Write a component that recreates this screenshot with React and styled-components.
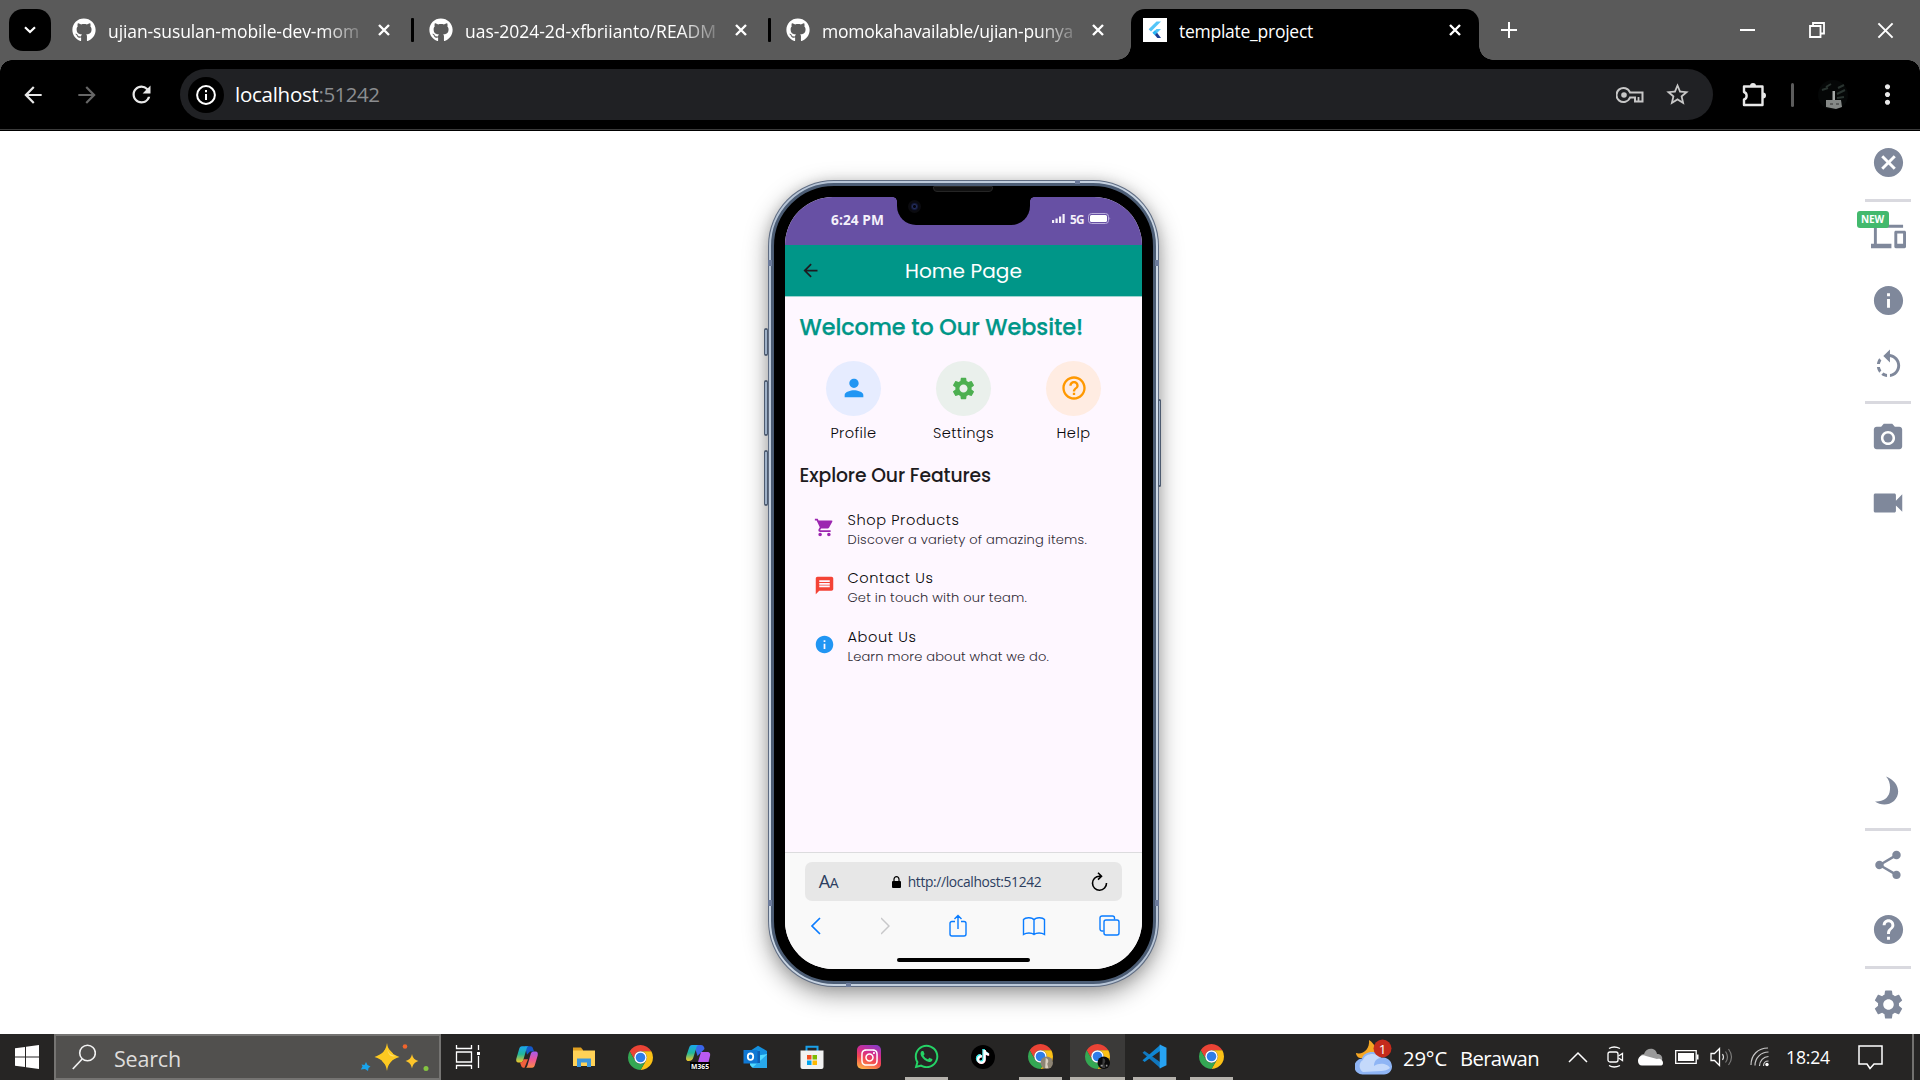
import React, { useLayoutEffect, useRef, useState } from "react";
import styled, { createGlobalStyle } from "styled-components";
import { FaGithub, FaWhatsapp, FaTiktok, FaInstagram } from "react-icons/fa";
import {
  MdArrowBack, MdArrowForward, MdRefresh, MdStarBorder, MdMoreVert,
  MdCancel, MdDevices, MdInfo, MdRotateLeft, MdPhotoCamera, MdVideocam, MdShare,
  MdHelp, MdSettings, MdPerson, MdHelpOutline, MdShoppingCart, MdMessage,
} from "react-icons/md";

const UI = `"Open Sans", "Noto Sans", sans-serif`;
const APP = `Poppins, Inter, "Open Sans", sans-serif`;

const Global = createGlobalStyle`
  * { box-sizing: border-box; }
  body { margin: 0; overflow: hidden; background: #fff; font-family: ${UI}; }
  svg { display: block; flex: none; }
`;

/* Label tracked out (or in) so that it fills the given width. */
const Tracked = styled.span`
  display: inline-block;
  white-space: pre;
`;
function Fit({ w, children }) {
  const ref = useRef(null);
  const [track, setTrack] = useState(0);
  useLayoutEffect(() => {
    const natural = ref.current.getBoundingClientRect().width;
    setTrack((w - natural) / children.length);
  }, [w, children]);
  return <Tracked ref={ref} style={{ letterSpacing: track }}>{children}</Tracked>;
}

const Desktop = styled.div`
  width: 1920px;
  height: 1080px;
  display: flex;
  flex-direction: column;
  background: #fff;
`;

/* ---------- browser ---------- */
const TabStrip = styled.div`
  height: 60px;
  flex: none;
  display: flex;
  background: #5a5a5a;
  color: #fff;
`;
const TabSearch = styled.div`
  width: 42px;
  height: 42px;
  margin: 9px 9px 9px 9px;
  border-radius: 14px;
  background: #000;
  display: grid;
  place-items: center;
`;
const Tab = styled.div`
  position: relative;
  width: ${(p) => (p.$active ? 348 : 357)}px;
  height: 51px;
  margin-top: 9px;
  padding: 0 ${(p) => (p.$active ? 14 : 3)}px 9px 12px;
  display: flex;
  align-items: center;
  background: ${(p) => (p.$active ? "#000" : "transparent")};
  border-radius: 14px 14px 0 0;
  &::before, &::after {
    content: ${(p) => (p.$active ? '""' : "none")};
    position: absolute;
    bottom: 0;
    width: 14px;
    height: 14px;
  }
  &::before { left: -14px; background: radial-gradient(circle at 0 0, transparent 13.5px, #000 14px); }
  &::after { right: -14px; background: radial-gradient(circle at 100% 0, transparent 13.5px, #000 14px); }
`;
const TabLabel = styled.div`
  width: 250px;
  margin: 2px 0 0 12px;
  overflow: hidden;
  font-size: 17.5px;
  line-height: 26px;
  mask-image: ${(p) => (p.$fade ? "linear-gradient(90deg, #000 215px, rgba(0,0,0,.25) 250px)" : "none")};
`;
const TabClose = styled.div`
  width: 20px;
  margin-left: 16px;
  display: grid;
  place-items: center;
`;
const TabRule = styled.div`
  width: 3px;
  height: 24px;
  border-radius: 1px;
  margin-left: auto;
  background: ${(p) => (p.$on ? "#000" : "transparent")};
`;
const NewTab = styled.div`
  width: 60px;
  height: 60px;
  display: grid;
  place-items: center;
`;
const WindowButtons = styled.div`
  margin-left: auto;
  display: flex;
`;
const WindowButton = styled.div`
  width: 69px;
  height: 60px;
  display: grid;
  place-items: center;
`;
const Toolbar = styled.div`
  height: 71px;
  flex: none;
  display: flex;
  align-items: flex-start;
  padding-top: 9px;
  background:
    radial-gradient(circle at 12px 12px, transparent 11.5px, #5a5a5a 12px) 0 0 / 12px 12px no-repeat,
    radial-gradient(circle at 0 12px, transparent 11.5px, #5a5a5a 12px) 100% 0 / 12px 12px no-repeat,
    linear-gradient(#000 69px, #3b3b3b 69px, #3b3b3b 70px, #000 70px);
  color: #e3e3e3;
`;
const ToolbarSlot = styled.div`
  width: ${(p) => p.$w}px;
  height: 51px;
  display: grid;
  place-items: center;
  color: ${(p) => p.$c || "#e8e8e8"};
`;
const Omnibox = styled.div`
  width: 1533px;
  height: 51px;
  border-radius: 26px;
  background: #202124;
  display: flex;
  align-items: center;
  padding: 0 22px 0 8px;
`;
const SiteInfo = styled.div`
  width: 36px;
  height: 36px;
  border-radius: 50%;
  background: #000;
  display: grid;
  place-items: center;
  margin-right: 11px;
`;
const Address = styled.div`
  flex: 1;
  display: flex;
  margin-bottom: 2px;
  font-size: 20.5px;
  line-height: 28px;
  color: #8b8d90;
  strong { font-weight: 400; color: #fff; }
`;
const OmniActions = styled.div`
  display: flex;
  align-items: center;
  gap: 20px;
  color: #c7c7c7;
`;
const ToolbarRule = styled.div`
  width: 3px;
  height: 24px;
  border-radius: 2px;
  background: #5c5c5c;
  margin-top: 14px;
`;

/* ---------- page ---------- */
const Page = styled.main`
  height: 903px;
  display: flex;
`;
const Stage = styled.div`
  flex: 1;
  padding: 49px 0 0 768px;
`;
const Frame = styled.div`
  position: relative;
  width: 391px;
  height: 807px;
  padding: 1px;
  border-radius: 66px;
  background: #5f6c82;
  box-shadow: 0 8px 24px rgba(0, 0, 0, 0.38), 0 1px 12px rgba(0, 0, 0, 0.12);
`;
const Rim = styled.div`
  height: 100%;
  padding: 2px;
  border-radius: 65px;
  background: linear-gradient(135deg, #b4c2d4, #d3deea 50%, #b4c2d4);
`;
const Bezel = styled.div`
  height: 100%;
  padding: 11px 12px 12px 11px;
  border: 3px solid #4c5d75;
  border-radius: 63px;
  background: #000;
`;
const SideButton = styled.div`
  position: absolute;
  left: ${(p) => (p.$right ? "auto" : "-4px")};
  right: ${(p) => (p.$right ? "-2px" : "auto")};
  top: ${(p) => p.$top}px;
  width: ${(p) => (p.$right ? 3 : 4)}px;
  height: ${(p) => p.$h}px;
  border: solid #4d5b70;
  border-width: 2px 1px;
  border-radius: 2px;
  background: #9fb1c8;
`;
const Antenna = styled.div`
  position: absolute;
  left: ${(p) => p.$x}px;
  top: ${(p) => p.$y}px;
  width: ${(p) => p.$w}px;
  height: ${(p) => p.$h}px;
  background: #6d7c9c;
`;
const Screen = styled.div`
  height: 772px;
  width: 357px;
  overflow: hidden;
  border-radius: 48px;
  display: flex;
  flex-direction: column;
  background: #fef7ff;
`;
const Notch = styled.div`
  position: absolute;
  left: 129px;
  top: 15px;
  width: 133px;
  height: 30px;
  border-radius: 0 0 19px 19px;
  background: #000;
  &::before, &::after {
    content: "";
    position: absolute;
    top: 2px;
    width: 4px;
    height: 4px;
  }
  &::before { left: -4px; background: radial-gradient(circle at 0 100%, transparent 3.5px, #000 4px); }
  &::after { right: -4px; background: radial-gradient(circle at 100% 100%, transparent 3.5px, #000 4px); }
`;
const Speaker = styled.div`
  position: absolute;
  left: 165px;
  top: 6px;
  width: 60px;
  height: 6px;
  border: 1px solid #252525;
  border-radius: 1px 1px 4px 4px;
  background: #111;
`;
const Lens = styled.div`
  position: absolute;
  left: 140px;
  top: 20px;
  width: 13px;
  height: 13px;
  border: 2px solid #0b0b0f;
  border-radius: 50%;
  background: radial-gradient(circle at 50% 50%, #05050c 1px, #222c5c 2px, #0a0b18 4px);
`;
const StatusBar = styled.div`
  height: 48px;
  flex: none;
  padding: 0 31px 3px 46px;
  display: flex;
  justify-content: space-between;
  align-items: center;
  background: #6750a4;
  color: #f4f0fa;
  font-size: 13.7px;
  font-weight: 700;
`;
const StatusIcons = styled.div`
  display: flex;
  align-items: center;
  gap: 4px;
  margin-top: -2px;
  font-size: 11.8px;
`;
const AppBar = styled.div`
  height: 52px;
  flex: none;
  display: grid;
  grid-template-columns: 50px 1fr 50px;
  align-items: center;
  justify-items: center;
  border-bottom: 1px solid #9fd4d0;
  background: #009688;
  color: #1d1b20;
`;
const AppTitle = styled.div`
  color: #fff;
  font-family: ${APP};
  font-size: 20.1px;
  padding-top: 1px;
`;
const AppBody = styled.div`
  flex: 1;
  padding: 16px 15px 0 14.5px;
  font-family: ${APP};
  color: #1d1b20;
`;
const Welcome = styled.div`
  color: #009688;
  font-size: 22.3px;
  line-height: 30px;
  font-weight: 500;
  -webkit-text-stroke: 0.25px #009688;
`;
const Shortcuts = styled.div`
  display: grid;
  grid-template-columns: repeat(3, 110px);
  justify-content: center;
  margin: 17.5px 0 0 0.5px;
`;
const Shortcut = styled.div`
  display: flex;
  flex-direction: column;
  align-items: center;
  gap: 7px;
  color: #08070a;
  font-size: 14.6px;
  font-weight: 300;
  line-height: 20px;
`;
const Disc = styled.div`
  width: 55px;
  height: 55px;
  border-radius: 50%;
  display: grid;
  place-items: center;
  background: ${(p) => p.$bg};
  color: ${(p) => p.$fg};
`;
const SectionTitle = styled.div`
  margin-top: 20px;
  font-size: 18.8px;
  line-height: 26px;
  font-weight: 500;
`;
const FeatureList = styled.div`
  margin-top: 21px;
  display: flex;
  flex-direction: column;
  gap: 18.7px;
`;
const Feature = styled.div`
  height: 40px;
  padding-left: 14.5px;
  display: flex;
  gap: 12.5px;
  font-weight: 300;
  & > svg { margin-top: 7px; color: ${(p) => p.$fg}; }
`;
const FeatureName = styled.div`
  font-size: 14.6px;
  line-height: 20px;
  color: #08070a;
`;
const FeatureNote = styled.div`
  font-size: 13px;
  line-height: 19px;
  color: #2e2a34;
`;
const SafariBar = styled.div`
  height: 117px;
  flex: none;
  border-top: 1px solid #dcdcde;
  background: #f9f9f9;
  padding: 9px 20px 0;
`;
const UrlBox = styled.div`
  height: 39px;
  border-radius: 7px;
  background: #e7e7e7;
  display: grid;
  grid-template-columns: 33px 1fr 46px;
  align-items: center;
  justify-items: center;
  color: #2c3e60;
`;
const TextSize = styled.div`
  justify-self: end;
  font-size: 18px;
  line-height: 24px;
  padding-top: 1px;
  letter-spacing: -0.5px;
  small { font-size: 14px; }
`;
const UrlText = styled.div`
  display: flex;
  align-items: center;
  gap: 7px;
  margin-left: 19px;
  font-size: 13.8px;
`;
const NavRow = styled.div`
  display: flex;
  justify-content: space-between;
  align-items: center;
  height: 24px;
  margin: 12px 0 0 4px;
  width: 311px;
  color: #0a7cff;
`;
const HomeIndicator = styled.div`
  width: 133px;
  height: 4px;
  border-radius: 2px;
  margin: 21px auto 0;
  background: #000;
`;
const SideTools = styled.div`
  width: 64px;
  color: #7f889b;
  display: flex;
  flex-direction: column;
  align-items: center;
`;
const Tool = styled.div`
  position: relative;
  height: ${(p) => p.$h}px;
  padding: ${(p) => p.$top || 0}px 0 ${(p) => p.$bottom || 0}px 0;
  display: grid;
  place-items: center;
  flex: none;
`;
const ToolRule = styled.div`
  width: 46px;
  height: 3px;
  flex: none;
  background: #d9d9df;
`;
const Spacer = styled.div`
  flex: ${(p) => (p.$h ? `0 0 ${p.$h}px` : 1)};
`;
const NewBadge = styled.div`
  position: absolute;
  left: -14px;
  top: 9px;
  width: 32px;
  height: 17px;
  border-radius: 3px;
  background: #43b96d;
  color: #fff;
  font-size: 10px;
  line-height: 17px;
  font-weight: 700;
  text-align: center;
`;

/* ---------- taskbar ---------- */
const Taskbar = styled.div`
  height: 46px;
  flex: none;
  display: flex;
  background: #262524;
  color: #fff;
`;
const Start = styled.div`
  width: 54px;
  display: grid;
  place-items: center;
`;
const SearchBox = styled.div`
  width: 387px;
  border: 2px solid #757472;
  background: #51504e;
  display: flex;
  align-items: center;
  padding: 0 9px 0 16px;
  color: #dedddc;
  font-size: 21.5px;
  & > div { flex: 1; margin-left: 18px; margin-top: 4px; line-height: 30px; }
`;
const Apps = styled.div`
  display: flex;
`;
const AppCell = styled.div`
  width: 57.1px;
  display: flex;
  justify-content: center;
  padding: 0 1px;
`;
const AppTile = styled.div`
  width: ${(p) => (p.$active ? 55 : 43)}px;
  height: 46px;
  padding-top: ${(p) => (p.$running ? 2 : 0)}px;
  border-bottom: ${(p) => (p.$running ? "3px solid #b5b2ac" : "none")};
  background: ${(p) => (p.$active ? "#3b3a39" : "transparent")};
  display: grid;
  place-items: center;
`;
const TaskView = styled.div`
  padding-right: 4px;
`;
const InstaTile = styled.div`
  width: 24px;
  height: 24px;
  border-radius: 5px;
  display: grid;
  place-items: center;
  background: linear-gradient(200deg, #7b3fd0 0%, #d22c8f 35%, #f4484f 60%, #fdb447 95%);
`;
const TikTokTile = styled.div`
  width: 24px;
  height: 24px;
  border-radius: 50%;
  display: grid;
  place-items: center;
  background: #000;
  svg { filter: drop-shadow(-0.8px -0.5px 0 #25f4ee) drop-shadow(0.8px 0.5px 0 #fe2c55); }
`;
const Tray = styled.div`
  flex: 1;
  display: flex;
  align-items: center;
  justify-content: flex-end;
`;
const Weather = styled.div`
  display: flex;
  align-items: center;
  gap: 11px;
  font-size: 20.3px;
  line-height: 28px;
  margin-right: 29px;
`;
const WeatherText = styled.div`
  display: flex;
  gap: 13px;
  margin-top: 2px;
`;
const TrayIcon = styled.div`
  width: ${(p) => p.$w}px;
  margin-right: ${(p) => p.$gap}px;
  display: flex;
`;
const Clock = styled.div`
  font-size: 17.6px;
  margin-right: 28px;
`;
const PeekLine = styled.div`
  width: 2px;
  height: 46px;
  margin-right: 6px;
  background: #72716f;
`;

const stroke = (c = "currentColor", w = 1.5) => ({ fill: "none", stroke: c, strokeWidth: w });

const CloseX = ({ s = 12, w = 2.4 }) => (
  <svg width={s} height={s} viewBox="0 0 12 12"><path d="M1 1 11 11M11 1 1 11" {...stroke("#fff", w)} /></svg>
);

const FlutterIcon = () => (
  <svg width="24" height="24" viewBox="0 0 24 24">
    <path fill="#fff" d="M0 0h24v24H0z" />
    <path fill="#54c5f8" d="M13.5 3.500h4.500L8 13.500 5.600 11.200z" />
    <path fill="#54c5f8" d="M13.500 11h4.500l-6.200 6.200-2.300-2.400z" />
    <path fill="#29b6f6" d="m9.500 14.800 2.300-2.300 2.300 2.300-2.300 2.300z" />
    <path fill="#1c3f94" d="m11.800 17.100 2.300-2.300 3.900 5.200h-3.600z" />
  </svg>
);

const Chrome = ({ face }) => (
  <svg width="25" height="25" viewBox="0 0 24 24">
    <path fill="#ea4335" d="M1.61 6A12 12 0 0 1 22.39 6H12A6 6 0 0 0 6.8 15Z" />
    <path fill="#fbc116" d="M22.39 6A12 12 0 0 1 12 24L17.2 15A6 6 0 0 0 12 6Z" />
    <path fill="#34a853" d="M12 24A12 12 0 0 1 1.61 6L6.8 15A6 6 0 0 0 17.2 15Z" />
    <circle cx="12" cy="12" r="6" fill="#fff" />
    <circle cx="12" cy="12" r="4.6" fill="#2f7de9" />
    {face && (
      <g>
        <circle cx="18" cy="18" r="6" fill={face === "dark" ? "#0a0a0a" : "#8d8474"} />
        <path d="M17 13.5c3 1 3 4 1.5 5.5l1 4h-3z" fill={face === "dark" ? "#3a3a3a" : "#d8cfc0"} />
        {face === "dark" && <path d="M15 20h2v1.500h-2zM20 20h1.500v1.500H20z" fill="#999" />}
      </g>
    )}
  </svg>
);

const Copilot = () => (
  <svg width="24" height="26" viewBox="0 0 24 24" preserveAspectRatio="none">
    <defs>
      <linearGradient id="cpA" x1="0" y1="0" x2="0" y2="1">
        <stop offset="0" stopColor="#1aa5f0" /><stop offset=".5" stopColor="#22b89a" /><stop offset="1" stopColor="#f3c926" />
      </linearGradient>
      <linearGradient id="cpB" x1="0" y1="0" x2="0" y2="1">
        <stop offset="0" stopColor="#a45cf0" /><stop offset=".5" stopColor="#ee5596" /><stop offset="1" stopColor="#fb8e45" />
      </linearGradient>
    </defs>
    <path fill="#1558c8" d="M10 2h5.500c1.500 0 2.200 1 2.600 2.300L19 7h-4l-3 3z" />
    <path fill="url(#cpA)" d="M7 2h7c-1.500 0-2 1-2.500 2.500L8.500 14c-.5 2-1.500 3-3.500 3H3.500C1.500 17 .8 15.500 1.300 13.500L4 5c.5-2 1.500-3 3-3Z" />
    <path fill="#f0603c" d="M13 14 9.500 22c-2 0-3-.7-3.500-2.500L5 17c2 0 3-1 3.500-3z" />
    <path fill="url(#cpB)" d="M17 22h-7c1.500 0 2-1 2.500-2.500L15.500 10c.5-2 1.500-3 3.500-3h1.500c2 0 2.700 1.500 2.200 3.500L20 19c-.5 2-1.500 3-3 3Z" />
  </svg>
);

const Folder = () => (
  <svg width="24" height="22" viewBox="0 0 24 22">
    <path fill="#e0a021" d="M1 1.500h8l2 2.500v3H1z" />
    <path fill="#ffd257" d="M1 4.500h22V20H1z" />
    <path fill="#3c96dc" d="M5 12.500h14V21h-4v-4.500H9V21H5z" />
  </svg>
);

const M365 = () => (
  <svg width="26" height="26" viewBox="0 0 26 26">
    <path fill="#3a66ea" d="M9 1h7c2 0 3 1.500 3.500 4l-4 4-3 3z" />
    <path fill="url(#cpA)" d="M7 1h7c-2 0-2.500 2-3 4L8.500 13c-.7 2.500-2 4-5 4C.8 17 .8 14.500 1.300 12L4 4c.5-2 1.500-3 3-3Z" />
    <path fill="#b95af0" d="M16 8h6c3 0 3.500 2 3 4l-1.500 6H13z" />
    <path fill="#000" d="M5 18h20v7.500H5z" />
    <text x="6" y="24.6" fill="#fff" fontFamily="Open Sans" fontWeight="700" fontSize="7.5" textLength="18" lengthAdjust="spacingAndGlyphs">M365</text>
  </svg>
);

const Outlook = () => (
  <svg width="25" height="24" viewBox="0 0 25 24">
    <path fill="#1490df" d="M7 6 15 .8 24 6v10H7z" />
    <path fill="#50d9ff" d="M7 12 24 9v13.500H9L7 20z" />
    <path fill="#28a8ea" d="M24 9.500V23L9 23z" />
    <path fill="#0f5fb5" d="M7 6h10v12H7z" />
    <path fill="#0f78d4" d="M.5 5h14v13.500H.5z" />
    <ellipse cx="7.500" cy="11.700" rx="2.700" ry="3.200" {...stroke("#fff", 1.8)} />
  </svg>
);

const Store = () => (
  <svg width="24" height="25" viewBox="0 0 24 25">
    <path d="M6.500 6V1.700h11V6" {...stroke("#1aa0e8", 2)} />
    <path fill="#f2f2f2" d="M.5 5.500h23V22a2 2 0 0 1-2 2h-19a2 2 0 0 1-2-2z" />
    <path fill="#f25022" d="M7 10h4.500v4.500H7z" /><path fill="#7fba00" d="M12.500 10H17v4.500h-4.500z" />
    <path fill="#00a4ef" d="M7 15.500h4.500V20H7z" /><path fill="#ffb900" d="M12.500 15.500H17V20h-4.500z" />
  </svg>
);

const VsCode = () => (
  <svg width="25" height="25" viewBox="0 0 24 24">
    <path d="M.500 8.300 2.500 6.700l15.500 11V23.500z" fill="#1177bd" />
    <path d="M.500 15.700 2.500 17.300 18 6.300V.500z" fill="#0f86d2" />
    <path d="M17 .5 23.500 3.500v17L17 23.500z" fill="#27a3f2" />
  </svg>
);

const Sparkles = () => (
  <svg width="70" height="28" viewBox="0 0 70 28">
    <path fill="#fdc921" d="M27 0c1.500 8.500 4 10.500 12.500 14C31 17 28.500 19.500 27 28c-1.500-8.500-4-11-12.500-14C23 10.500 25.500 8.500 27 0Z" />
    <path fill="#fdc921" d="M27 4l6 6.500-1 7-5 6-5-5.500v-7z" />
    <path fill="#ffe06a" d="M27 4c1 6 3 8 9 9-4 1-8 1-9-9Z" />
    <path fill="#fdc52a" d="M52 11c1 4.500 2.500 5.500 6.500 7-4 1.500-5.500 3-6.500 7.500-1-4.500-2.500-6-6.500-7.500 4-1.500 5.500-2.500 6.500-7Z" />
    <path fill="#19a3ea" d="M6 19 7.500 22 10.500 23.500 8.500 25 8 28 5 26 .8 26.500 2.500 23.500 1.500 21.500 4.500 22Z" />
    <circle cx="45" cy="3.5" r="2.3" fill="#f0642d" />
    <circle cx="66" cy="25.5" r="2.5" fill="#84c441" />
  </svg>
);

const tabs = [
  { label: "ujian-susulan-mobile-dev-mom", rule: true },
  { label: "uas-2024-2d-xfbriianto/READM", rule: true },
  { label: "momokahavailable/ujian-punya", rule: false },
];

const features = [
  { icon: <MdShoppingCart size={21} />, fg: "#9c27b0", name: "Shop Products", nw: 112, note: "Discover a variety of amazing items.", w: 239.5 },
  { icon: <MdMessage size={21} />, fg: "#f44336", name: "Contact Us", nw: 86, note: "Get in touch with our team.", w: 179.5 },
  { icon: <MdInfo size={21} />, fg: "#2196f3", name: "About Us", nw: 69, note: "Learn more about what we do.", w: 201.5 },
];

const apps = [
  { icon: (
    <TaskView>
      <svg width="26" height="26" viewBox="0 0 26 26">
        <path d="M1.500 1v3.500h15V1M1.500 8h15v10h-15zM1.500 25v-3.500h15V25M23.500 1v5M23.500 12v12" {...stroke("#fff", 1.3)} />
        <path fill="#fff" d="M22 8h3v3h-3z" />
      </svg>
    </TaskView>) },
  { icon: <Copilot /> },
  { icon: <Folder /> },
  { icon: <Chrome /> },
  { icon: <M365 /> },
  { icon: <Outlook /> },
  { icon: <Store /> },
  { icon: <InstaTile><FaInstagram size={19} color="#fff" /></InstaTile> },
  { icon: <FaWhatsapp size={27} color="#25d366" />, running: true },
  { icon: <TikTokTile><FaTiktok size={14} color="#fff" /></TikTokTile> },
  { icon: <Chrome face="light" />, running: true },
  { icon: <Chrome face="dark" />, running: true, active: true },
  { icon: <VsCode />, running: true },
  { icon: <Chrome />, running: true },
];

function Browser() {
  return (
    <>
      <TabStrip>
        <TabSearch>
          <svg width="12" height="8" viewBox="0 0 12 8"><path d="M1 1.200 6 6l5-4.800" {...stroke("#fff", 2.2)} /></svg>
        </TabSearch>
        {tabs.map((t) => (
          <Tab key={t.label}>
            <FaGithub size={24} />
            <TabLabel $fade><Fit w={251}>{t.label}</Fit></TabLabel>
            <TabClose><CloseX /></TabClose>
            <TabRule $on={t.rule} />
          </Tab>
        ))}
        <Tab $active>
          <FlutterIcon />
          <TabLabel><Fit w={134}>template_project</Fit></TabLabel>
          <TabClose><CloseX /></TabClose>
        </Tab>
        <NewTab>
          <svg width="16" height="16" viewBox="0 0 16 16"><path d="M8 0v16M0 8h16" {...stroke("#fff", 2)} /></svg>
        </NewTab>
        <WindowButtons>
          <WindowButton><svg width="15" height="2"><path fill="#fff" d="M0 0h15v2H0z" /></svg></WindowButton>
          <WindowButton>
            <svg width="16" height="16" viewBox="0 0 16 16"><path d="M1 4h10.500v11H1zM4 4V1h11v10.500h-3.500" {...stroke("#fff", 1.8)} /></svg>
          </WindowButton>
          <WindowButton><CloseX s={17} w={1.4} /></WindowButton>
        </WindowButtons>
      </TabStrip>
      <Toolbar>
        <ToolbarSlot $w={66}><MdArrowBack size={26} /></ToolbarSlot>
        <ToolbarSlot $w={42} $c="#666"><MdArrowForward size={26} /></ToolbarSlot>
        <ToolbarSlot $w={66}><MdRefresh size={27} /></ToolbarSlot>
        <ToolbarSlot $w={6} />
        <Omnibox>
          <SiteInfo>
            <svg width="20" height="20" viewBox="0 0 20 20">
              <circle cx="10" cy="10" r="8.9" {...stroke("#fff", 2)} />
              <path fill="#fff" d="M9 9h2v6H9zM9 5h2v2.300H9z" />
            </svg>
          </SiteInfo>
          <Address><strong><Fit w={83.5}>localhost</Fit></strong><Fit w={61}>:51242</Fit></Address>
          <OmniActions>
            <svg width="28" height="18" viewBox="0 0 28 18">
              <path d="M14 6.500A7 7 0 1 0 14 11.500H19V15.500H26.500V6.500Z" {...stroke("currentColor", 2)} />
              <circle cx="8" cy="9" r="2.8" fill="currentColor" />
              <path d="M22.500 11v4" {...stroke("currentColor", 1.8)} />
            </svg>
            <MdStarBorder size={27} />
          </OmniActions>
        </Omnibox>
        <ToolbarSlot $w={78}>
          <svg width="31" height="27" viewBox="-4 0 31 27">
            <path d="M3 5.500H21.500V24H3V18.500C6.500 17.500 6.500 12 3 11Z" strokeLinejoin="round" {...stroke("currentColor", 2.4)} />
            <path fill="currentColor" d="M9 5a3 3 0 0 1 6 0zM22 11.500a3 3 0 0 1 0 6z" />
          </svg>
        </ToolbarSlot>
        <ToolbarRule />
        <ToolbarSlot $w={78}>
          <svg width="30" height="30" viewBox="0 0 30 30">
            <circle cx="15" cy="15" r="15" fill="#050707" />
            <path d="M8 7 13 4M20 8l6-3M19 14l8-4M4 10l6-2M19 18l7-1" {...stroke("#29332f", 2)} />
            <path d="M14.500 11h2.500v10h-2.500z" fill="#a7aaa9" />
            <path d="M8 20h15l1 7-6 2-10-2z" fill="#858987" />
            <path d="M12 24h3M18 24h3" {...stroke("#333", 1)} />
          </svg>
        </ToolbarSlot>
        <ToolbarSlot $w={30}><MdMoreVert size={31} /></ToolbarSlot>
      </Toolbar>
    </>
  );
}

function Phone() {
  return (
    <Frame>
      <SideButton $top={148} $h={28} />
      <SideButton $top={200} $h={56} />
      <SideButton $top={270} $h={56} />
      <SideButton $right $top={219} $h={88} />
      <Rim>
        <Bezel>
          <Screen>
            <StatusBar>
              <Fit w={53}>6:24 PM</Fit>
              <StatusIcons>
                <svg width="14" height="9"><path fill="#f4f0fa" d="M0 6h2.200v3H0zM3.500 4.500h2.200V9H3.500zM7 2.500h2.200V9H7zM10.500 0h2.200v9h-2.200z" /></svg>
                <Fit w={14}>5G</Fit>
                <svg width="23" height="11" viewBox="0 0 23 11">
                  <rect x=".5" y=".5" width="20" height="10" rx="3" {...stroke("#b9addb", 1)} />
                  <rect x="2" y="2" width="17" height="7" rx="1.5" fill="#fff" />
                  <path fill="#b9addb" d="M21.500 4q1.500 1.500 0 3z" />
                </svg>
              </StatusIcons>
            </StatusBar>
            <AppBar>
              <MdArrowBack size={21} />
              <AppTitle><Fit w={117}>Home Page</Fit></AppTitle>
            </AppBar>
            <AppBody>
              <Welcome><Fit w={283.5}>Welcome to Our Website!</Fit></Welcome>
              <Shortcuts>
                <Shortcut><Disc $bg="#e6ecff" $fg="#2196f3"><MdPerson size={28} /></Disc><Fit w={46}>Profile</Fit></Shortcut>
                <Shortcut><Disc $bg="#eaf0ec" $fg="#4caf50"><MdSettings size={27} /></Disc><Fit w={61}>Settings</Fit></Shortcut>
                <Shortcut><Disc $bg="#ffece2" $fg="#ff9800"><MdHelpOutline size={28} /></Disc><Fit w={34}>Help</Fit></Shortcut>
              </Shortcuts>
              <SectionTitle><Fit w={191.5}>Explore Our Features</Fit></SectionTitle>
              <FeatureList>
                {features.map((f) => (
                  <Feature key={f.name} $fg={f.fg}>
                    {f.icon}
                    <div>
                      <FeatureName><Fit w={f.nw}>{f.name}</Fit></FeatureName>
                      <FeatureNote><Fit w={f.w}>{f.note}</Fit></FeatureNote>
                    </div>
                  </Feature>
                ))}
              </FeatureList>
            </AppBody>
            <SafariBar>
              <UrlBox>
                <TextSize>A<small>A</small></TextSize>
                <UrlText>
                  <svg width="9" height="12" viewBox="0 0 9 12">
                    <rect x="0" y="5" width="9" height="7" rx="1" fill="#000" />
                    <path d="M2 5.500V3.200a2.500 2.500 0 0 1 5 0v2.300" {...stroke("#000", 1.2)} />
                  </svg>
                  <Fit w={133.5}>http://localhost:51242</Fit>
                </UrlText>
                <svg width="17" height="20" viewBox="0 0 17 20">
                  <path d="M15.500 11a7 7 0 1 1-7-6.800h2M7 .8l3.500 3.400L7 7.600" {...stroke("#000", 1.6)} />
                </svg>
              </UrlBox>
              <NavRow>
                <svg width="13" height="20" viewBox="0 0 13 20"><path d="M11 3 3 11l8 8" {...stroke("currentColor", 1.7)} /></svg>
                <svg width="9" height="20" viewBox="0 0 9 20"><path d="m0 3 8 8-8 8" {...stroke("#c8c8ca", 1.5)} /></svg>
                <svg width="14" height="23" viewBox="1 0 14 23" overflow="visible">
                  <path d="M6 7.500H3a2 2 0 0 0-2 2V20a2 2 0 0 0 2 2h12a2 2 0 0 0 2-2V9.500a2 2 0 0 0-2-2h-3M9 15V1.500M5.500 5 9 1.500 12.500 5" {...stroke("currentColor", 1.4)} />
                </svg>
                <svg width="17" height="22" viewBox="0.5 -2 17 22" overflow="visible">
                  <path d="M11.500 18.500V4C10 1 3 1 1 3.500v15c3-2 8-2 10.500 0 2.500-2 7.500-2 10.500 0v-15C20 1 13 1 11.500 4" {...stroke("currentColor", 1.4)} />
                </svg>
                <svg width="21" height="21" viewBox="0 0 21 21">
                  <path d="M4.500 16H3a2 2 0 0 1-2-2V3a2 2 0 0 1 2-2h10.500a2 2 0 0 1 2 2v1.500" {...stroke("currentColor", 1.4)} />
                  <rect x="5" y="5" width="15" height="15" rx="2" {...stroke("currentColor", 1.4)} />
                </svg>
              </NavRow>
              <HomeIndicator />
            </SafariBar>
          </Screen>
        </Bezel>
      </Rim>
      <Antenna $x={0} $y={80} $w={4} $h={6} />
      <Antenna $x={387} $y={80} $w={4} $h={6} />
      <Antenna $x={0} $y={720} $w={4} $h={6} />
      <Antenna $x={387} $y={720} $w={4} $h={6} />
      <Antenna $x={307} $y={0} $w={5} $h={4} />
      <Antenna $x={78} $y={803} $w={5} $h={4} />
      <Notch />
      <Speaker />
      <Lens />
    </Frame>
  );
}

function Tools() {
  return (
    <SideTools>
      <Tool $h={63}><MdCancel size={35} /></Tool>
      <Spacer $h={5} />
      <ToolRule />
      <Tool $h={69}>
        <MdDevices size={35} />
        <NewBadge><Fit w={23}>NEW</Fit></NewBadge>
      </Tool>
      <Tool $h={59}><MdInfo size={35} /></Tool>
      <Tool $h={71}><MdRotateLeft size={35} /></Tool>
      <ToolRule />
      <Tool $h={68}><MdPhotoCamera size={34} /></Tool>
      <Tool $h={62}><MdVideocam size={38} /></Tool>
      <Spacer />
      <Tool $h={76}>
        <svg width="28" height="29" viewBox="0 0 28 29">
          <path fill="currentColor" d="M12 .5C24 5 28 17 20 25c-6 5-14 4-19 .5C9 26 14 22 15.500 16.500 17 10 15.500 4 12 .5Z" />
        </svg>
      </Tool>
      <ToolRule />
      <Tool $h={67}><MdShare size={34} /></Tool>
      <Tool $h={68} $bottom={5}><MdHelp size={35} /></Tool>
      <ToolRule />
      <Tool $h={65} $top={5}><MdSettings size={35} /></Tool>
    </SideTools>
  );
}

function WindowsTaskbar() {
  return (
    <Taskbar>
      <Start>
        <svg width="24" height="24" viewBox="0 0 24 24"><path fill="#fff" d="M0 3.200 10 2v9.500H0zM11 1.800 24 0v11.500H11zM0 12.500h10V22L0 20.800zM11 12.500h13V24L11 22.200z" /></svg>
      </Start>
      <SearchBox>
        <svg width="24" height="26" viewBox="0 0 24 26"><circle cx="15.500" cy="9" r="7.8" {...stroke("#f2f2f2", 1.6)} /><path d="M10.200 15 .8 25" {...stroke("#f2f2f2", 1.7)} /></svg>
        <div><Fit w={67}>Search</Fit></div>
        <Sparkles />
      </SearchBox>
      <Apps>
        {apps.map((a, i) => (
          <AppCell key={i}><AppTile $running={a.running} $active={a.active}>{a.icon}</AppTile></AppCell>
        ))}
      </Apps>
      <Tray>
        <Weather>
          <svg width="37" height="36" viewBox="0 0 37 36">
            <path fill="#f5a623" d="M14 1c6 4 9 10 6 18H5c-2 0-4-3-4-5 7 2 14-4 13-13Z" />
            <path fill="#8fb5f5" d="M8 35.500a8 8 0 0 1-1-16c2-8 16-9 19-1 8-1 11 5 11 9s-3 8-8 8z" />
            <path fill="#c4d9fb" d="M8 33a7 7 0 0 1 0-12c2-7 14-8 17-2-5 1-6 5-6 8 6-4 14-2 16 2-2 2-6 3-9 3z" />
            <circle cx="27.500" cy="9.500" r="9" fill="#c42b1c" />
            <text x="27.500" y="14.500" textAnchor="middle" fill="#fff" fontFamily="Open Sans" fontSize="13.5">1</text>
          </svg>
          <WeatherText><Fit w={44}>29°C</Fit><Fit w={79}>Berawan</Fit></WeatherText>
        </Weather>
        <TrayIcon $w={20} $gap={19}>
          <svg width="20" height="12" viewBox="0 0 20 12"><path d="m1 11 9-9 9 9" {...stroke("#fff", 1.5)} /></svg>
        </TrayIcon>
        <TrayIcon $w={17} $gap={14}>
          <svg width="17" height="22" viewBox="0 0 17 22">
            <rect x="1" y="6" width="10" height="10" rx="2" {...stroke("#fff", 1.3)} />
            <path d="m11.500 10 4-2.500v7l-4-2.500M2 2.500q5-3 11 0M2 19.500q5 3 11 0" {...stroke("#fff", 1.3)} />
          </svg>
        </TrayIcon>
        <TrayIcon $w={25} $gap={12}>
          <svg width="25" height="18" viewBox="0 0 25 18">
            <path fill="#9a9a9a" d="M6 6C8-1 18-1 19 6c4 0 6 3 5 6H1c0-3 2-6 5-6Z" />
            <path fill="#fff" d="M0 13c0-4 4-7 8-5l11 3c4-1 6 2 6 4s-1 2.500-3 2.500H4c-2.500 0-4-2-4-4.500Z" />
          </svg>
        </TrayIcon>
        <TrayIcon $w={24} $gap={11}>
          <svg width="24" height="14" viewBox="0 0 24 14"><path d="M.7.7h20.500v12.600H.7z" {...stroke("#fff", 1.3)} /><path fill="#fff" d="M3 3h16v8H3zM22 4.500h1.500v5H22z" /></svg>
        </TrayIcon>
        <TrayIcon $w={24} $gap={16}>
          <svg width="24" height="20" viewBox="0 0 24 20">
            <path d="M1 6.500h3.500L9.500 1.500v17l-5-5H1z" {...stroke("#fff", 1.3)} />
            <path d="M12.500 7q2 3 0 6" {...stroke("#ddd", 1.2)} /><path d="M15.500 4.500q4 5.500 0 11M18.500 2q6 8 0 16" {...stroke("#7b7a79", 1.2)} />
          </svg>
        </TrayIcon>
        <TrayIcon $w={20} $gap={16}>
          <svg width="20" height="20" viewBox="0 0 20 20">
            <path d="M1 18C1 8 8 1 18 1M5 18.500C5 11 11 5 18.500 5M9.500 19c0-5 4-9.500 9-9.500M13.500 19c0-3 2-5 5-5" {...stroke("#c8c8c8", 1.2)} />
            <circle cx="17" cy="17.500" r="1.7" fill="#fff" />
          </svg>
        </TrayIcon>
        <Clock><Fit w={44}>18:24</Fit></Clock>
        <TrayIcon $w={25} $gap={29}>
          <svg width="25" height="25" viewBox="0 0 25 25"><path d="M1 1h23v18h-8l-4 4.500-3-4.500H1z" {...stroke("#fff", 1.5)} /></svg>
        </TrayIcon>
        <PeekLine />
      </Tray>
    </Taskbar>
  );
}

export default function App() {
  return (
    <Desktop>
      <Global />
      <Browser />
      <Page>
        <Stage><Phone /></Stage>
        <Tools />
      </Page>
      <WindowsTaskbar />
    </Desktop>
  );
}
